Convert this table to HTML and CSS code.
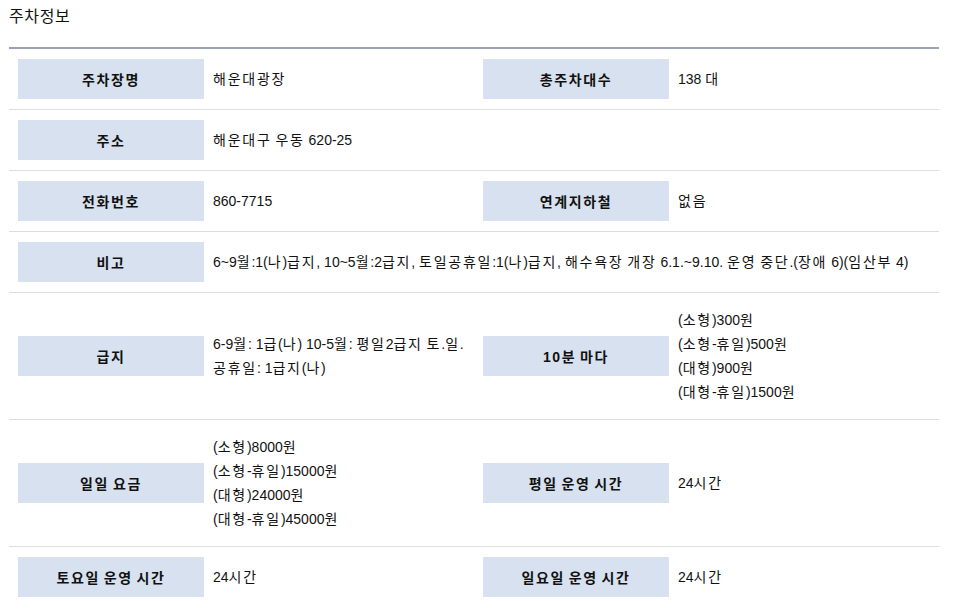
FILE: index.html
```html
<!DOCTYPE html>
<html lang="ko">
<head>
<meta charset="utf-8">
<link rel="stylesheet" href="styles.css">
</head>
<body>
<div class="page">
  <h2 class="title">주차정보</h2>
  <div class="table">
    <div class="row">
      <div class="th"><span class="label">주차장명</span></div>
      <div class="td"><span><span class="k">해운대광장</span></span></div>
      <div class="th"><span class="label">총주차대수</span></div>
      <div class="td"><span>138 <span class="k">대</span></span></div>
    </div>
    <div class="row">
      <div class="th"><span class="label">주소</span></div>
      <div class="td span3"><span><span class="k">해운대구 우동</span> 620-25</span></div>
    </div>
    <div class="row">
      <div class="th"><span class="label">전화번호</span></div>
      <div class="td"><span>860-7715</span></div>
      <div class="th"><span class="label">연계지하철</span></div>
      <div class="td"><span><span class="k">없음</span></span></div>
    </div>
    <div class="row">
      <div class="th"><span class="label">비고</span></div>
      <div class="td span3"><span>6~9<span class="k">월</span>:1(<span class="k">나</span>)<span class="k">급지</span>, 10~5<span class="k">월</span>:2<span class="k">급지</span>, <span class="k">토일공휴일</span>:1(<span class="k">나</span>)<span class="k">급지</span>, <span class="k">해수욕장 개장</span> 6.1.~9.10. <span class="k">운영 중단</span>.(<span class="k">장애</span> 6)(<span class="k">임산부</span> 4)</span></div>
    </div>
    <div class="row">
      <div class="th"><span class="label">급지</span></div>
      <div class="td"><span>6-9<span class="k">월</span>: 1<span class="k">급</span>(<span class="k">나</span>) 10-5<span class="k">월</span>: <span class="k">평일</span>2<span class="k">급지 토</span>.<span class="k">일</span>.<br><span class="k">공휴일</span>: 1<span class="k">급지</span>(<span class="k">나</span>)</span></div>
      <div class="th"><span class="label">10분 마다</span></div>
      <div class="td"><span>(<span class="k">소형</span>)300<span class="k">원</span><br>(<span class="k">소형</span>-<span class="k">휴일</span>)500<span class="k">원</span><br>(<span class="k">대형</span>)900<span class="k">원</span><br>(<span class="k">대형</span>-<span class="k">휴일</span>)1500<span class="k">원</span></span></div>
    </div>
    <div class="row">
      <div class="th"><span class="label">일일 요금</span></div>
      <div class="td"><span>(<span class="k">소형</span>)8000<span class="k">원</span><br>(<span class="k">소형</span>-<span class="k">휴일</span>)15000<span class="k">원</span><br>(<span class="k">대형</span>)24000<span class="k">원</span><br>(<span class="k">대형</span>-<span class="k">휴일</span>)45000<span class="k">원</span></span></div>
      <div class="th"><span class="label">평일 운영 시간</span></div>
      <div class="td"><span>24<span class="k">시간</span></span></div>
    </div>
    <div class="row">
      <div class="th"><span class="label">토요일 운영 시간</span></div>
      <div class="td"><span>24<span class="k">시간</span></span></div>
      <div class="th"><span class="label">일요일 운영 시간</span></div>
      <div class="td"><span>24<span class="k">시간</span></span></div>
    </div>
  </div>
</div>
</body>
</html>
```

FILE: styles.css
```css
html, body {
  margin: 0;
  padding: 0;
  background: #fff;
}
body {
  font-family: "Liberation Sans", "Noto Sans CJK KR", sans-serif;
  color: #111;
  font-size: 14px;
}
.page {
  padding: 0 9px;
  width: 930px;
}
.title {
  margin: 0;
  font-size: 16px;
  font-weight: normal;
  line-height: 24px;
  padding: 5px 0 18px;
  color: #111;
  letter-spacing: 0.6px;
}
.table {
  border-top: 2px solid #98a2b3;
}
.row {
  display: grid;
  grid-template-columns: 195px 270px 195px 270px;
  border-bottom: 1px solid #dddddd;
}
.th {
  padding: 10px 0 10px 9px;
  display: flex;
  align-items: center;
}
.label {
  display: flex;
  align-items: center;
  justify-content: center;
  width: 186px;
  height: 40px;
  background: #d7e1ef;
  font-weight: bold;
  color: #111;
  letter-spacing: 1.6px;
  word-spacing: -1.6px;
}
.td {
  padding: 15px 0 15px 9px;
  line-height: 24px;
  display: flex;
  align-items: center;
}
.k {
  letter-spacing: 1.75px;
  word-spacing: -1.75px;
}
.span3 {
  grid-column: span 3;
}
```
